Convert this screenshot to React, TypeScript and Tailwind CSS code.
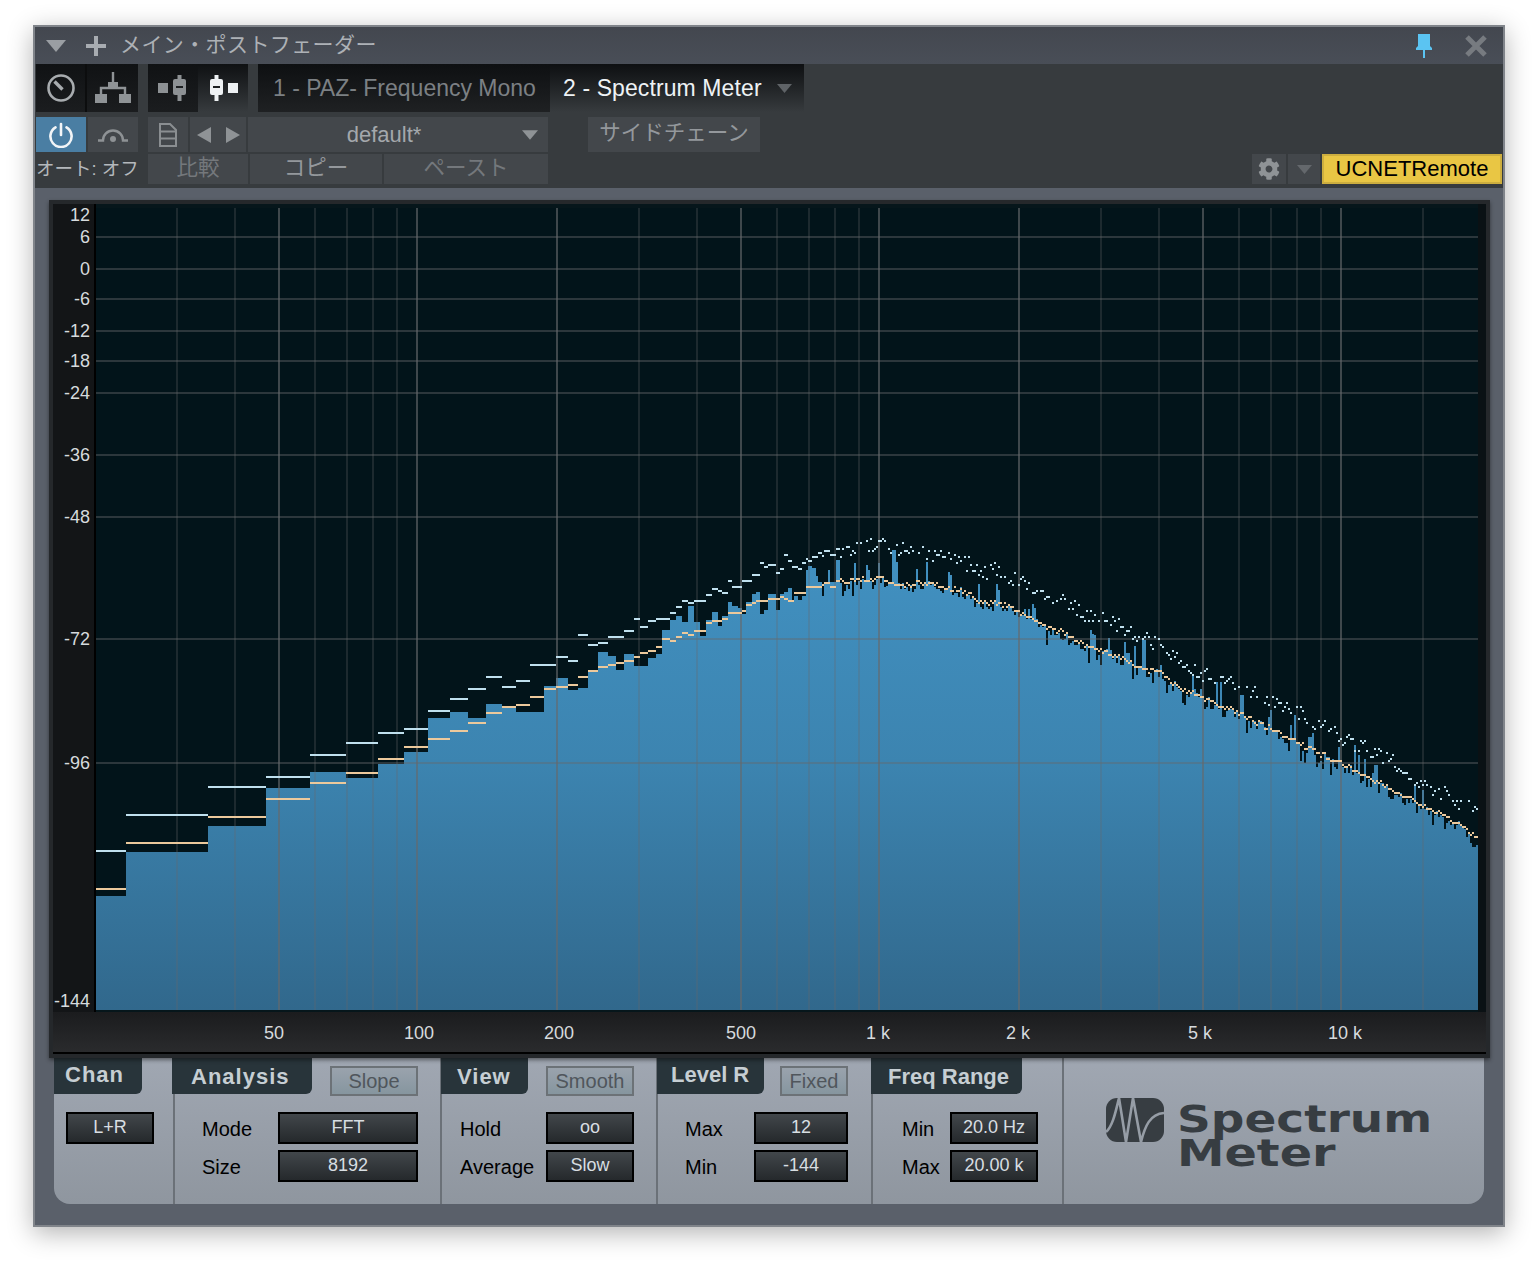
import { FaCog } from "react-icons/fa";

const sans = "font-['Liberation_Sans','Noto_Sans_CJK_JP',sans-serif]";

// [x0, x1, top of the blue, peak hold, average] measured off the low end of the spectrum
const lowBands: number[][] = [
  [96, 126, 896, 851, 889], [126, 208, 852, 815, 843], [208, 266, 826, 787, 817], [266, 310, 788, 777, 799],
  [310, 346, 772, 755, 783], [346, 378, 778, 743, 773], [378, 404, 764, 733, 759], [404, 428, 752, 729, 747],
  [428, 450, 718, 711, 739], [450, 468, 712, 699, 731], [468, 486, 718, 689, 723], [486, 502, 704, 677, 713],
  [502, 516, 708, 687, 707], [516, 530, 712, 681, 705], [530, 544, 712, 665, 697], [544, 556, 686, 665, 689],
  [556, 568, 678, 657, 687], [568, 578, 690, 661, 685], [578, 588, 688, 635, 677], [588, 598, 672, 645, 671],
  [598, 608, 652, 643, 667], [608, 616, 656, 637, 665], [616, 624, 670, 637, 663], [624, 634, 654, 631, 661],
  [634, 640, 666, 619, 657], [640, 648, 666, 627, 653], [648, 656, 658, 621, 651], [656, 662, 654, 619, 647],
  [662, 670, 630, 619, 639], [670, 676, 620, 613, 641], [676, 682, 616, 607, 637], [682, 688, 622, 601, 633],
  [688, 694, 606, 603, 635], [694, 700, 622, 601, 631], [700, 706, 636, 601, 631], [706, 712, 620, 595, 623],
  [712, 718, 612, 589, 621], [718, 722, 626, 591, 621], [722, 728, 616, 593, 619], [728, 732, 602, 581, 613],
  [732, 738, 606, 587, 613], [738, 742, 608, 587, 613], [742, 746, 614, 581, 611], [746, 752, 602, 581, 605],
  [752, 756, 594, 575, 603], [756, 760, 592, 575, 601], [760, 764, 614, 563, 601], [764, 768, 610, 567, 601],
  [768, 776, 594, 565, 599], [776, 780, 610, 573, 599], [780, 784, 594, 569, 597], [784, 788, 592, 555, 599],
  [788, 792, 588, 561, 601], [792, 794, 602, 567, 601], [794, 798, 596, 567, 593], [798, 802, 600, 569, 593],
  [802, 806, 596, 563, 593], [806, 808, 570, 559, 587], [808, 812, 566, 561, 587], [812, 816, 568, 557, 587],
  [816, 818, 576, 557, 587], [818, 822, 582, 553, 587], [822, 824, 596, 556, 585], [824, 828, 582, 551, 583],
  [828, 830, 570, 551, 583], [830, 836, 582, 555, 587], [836, 840, 560, 549, 581],
];

const avgCurve = [
  [840, 581], [880, 577], [900, 585], [920, 581], [940, 585], [960, 589], [980, 601], [1003, 603], [1020, 613], [1040, 623],
  [1060, 630], [1080, 642], [1100, 650], [1120, 656], [1140, 667], [1160, 672], [1180, 688], [1200, 695], [1220, 705],
  [1240, 713], [1260, 723], [1280, 732], [1300, 743], [1320, 753], [1340, 762], [1360, 773], [1380, 783], [1400, 793],
  [1420, 803], [1440, 813], [1460, 825], [1478, 837],
];
const peakCurve = [
  [840, 551], [880, 543], [913, 552], [940, 553], [960, 560], [980, 570], [1000, 570], [1020, 581], [1040, 593], [1060, 596],
  [1080, 611], [1100, 618], [1120, 626], [1140, 636], [1160, 643], [1180, 660], [1200, 671], [1220, 678], [1240, 686],
  [1260, 695], [1280, 706], [1300, 713], [1320, 723], [1340, 735], [1360, 746], [1380, 755], [1400, 766], [1420, 783],
  [1440, 791], [1460, 801], [1478, 811],
];

// spikes above the average and dips below it, x -> y
const spikes: Record<number, number> = {
  892: 550, 894: 550, 896: 562, 926: 562, 947: 572, 948: 572, 978: 584, 996: 584, 998: 590, 1032: 604, 1034: 608, 1090: 630, 1092: 634,
  1108: 638, 1110: 650, 1124: 642, 1134: 646, 1142: 640, 1144: 640, 1192: 676, 1216: 682, 1220: 682, 1240: 695, 1242: 695,
  1270: 710, 1294: 715, 1308: 737, 1310: 737, 1354: 745, 1358: 755, 1374: 765, 1376: 765, 1414: 785, 1422: 790,
  854: 563, 866: 565, 868: 570,
};
const dips: Record<number, number> = {
  842: 596, 852: 596, 886: 586, 912: 592, 1046: 645, 1062: 640, 1088: 663, 1096: 660, 1182: 703, 1222: 717, 1224: 717, 1288: 751,
  1300: 761, 1304: 763, 1322: 769, 1390: 799, 1416: 813, 1432: 825, 1444: 829, 1472: 847, 1474: 847, 1352: 775, 1250: 728,
};

const lerp = (curve: number[][], x: number) => {
  for (let i = 1; i < curve.length; i++) {
    if (x <= curve[i][0]) {
      const [x0, y0] = curve[i - 1];
      const [x1, y1] = curve[i];
      return y0 + ((y1 - y0) * (x - x0)) / (x1 - x0);
    }
  }
  return curve[curve.length - 1][1];
};

let seed = 4711;
const rnd = () => {
  seed = (seed * 16807) % 2147483647;
  return seed / 2147483647;
};
const snap = (v: number) => Math.round(v / 2) * 2 + 1;

const highBands: number[][] = [];
for (let x = 840; x < 1478; x += 2) {
  const avg = snap(lerp(avgCurve, x) + (rnd() - 0.5) * 5);
  let top = snap(avg + 2 + (rnd() - 0.5) * 10);
  const roll = rnd();
  if (roll < 0.1) top = avg - 6 - Math.floor(rnd() * 6) * 2;
  else if (x > 1000 && roll < 0.2) top = avg + 6 + Math.floor(rnd() * 6) * 2;
  if (spikes[x]) top = spikes[x];
  if (dips[x]) top = dips[x];
  const peak = rnd() < 0.8 ? snap(lerp(peakCurve, x) + (rnd() - 0.5) * 15) : 0;
  highBands.push([x, x + 2, top, peak, avg]);
}
const bands = [...lowBands, ...highBands];

const vLines = [
  [177, 0], [235, 0], [279, 1], [315, 0], [347, 0], [373, 0], [397, 0], [417, 1], [557, 1], [639, 0], [697, 0], [741, 1],
  [777, 0], [809, 0], [835, 0], [859, 0], [879, 1], [1019, 1], [1101, 0], [1159, 0], [1203, 1], [1239, 0], [1271, 0], [1297, 0],
  [1321, 0], [1341, 1], [1423, 0],
];
const hLines = [237, 269, 299, 331, 361, 393, 455, 517, 639, 763];

const dbTicks = [
  ["12", 215], ["6", 237], ["0", 269], ["-6", 299], ["-12", 331], ["-18", 361], ["-24", 393], ["-36", 455], ["-48", 517],
  ["-72", 639], ["-96", 763], ["-144", 1001],
] as const;
const freqTicks = [
  ["50", 274], ["100", 419], ["200", 559], ["500", 741], ["1 k", 878], ["2 k", 1018], ["5 k", 1200], ["10 k", 1345],
] as const;

const Spectrum = () => (
  <svg viewBox="96 208 1382 802" className="block h-[802px] w-[1382px]" shapeRendering="crispEdges">
    <defs>
      <linearGradient id="blue" gradientUnits="userSpaceOnUse" x1="0" y1="560" x2="0" y2="1010">
        <stop offset="0" stopColor="#4190c0" />
        <stop offset="0.45" stopColor="#3c84b0" />
        <stop offset="1" stopColor="#31688c" />
      </linearGradient>
    </defs>
    <rect x="96" y="208" width="1382" height="802" fill="#02141a" />
    {bands.map(([x0, x1, top]) => (
      <rect key={x0} x={x0} y={top} width={x1 - x0} height={1010 - top} fill="url(#blue)" />
    ))}
    {vLines.map(([x, strong]) => (
      <rect key={x} x={x - 1} y="208" width="2" height="802" fill="#66696c" opacity={strong ? 0.62 : 0.27} />
    ))}
    {hLines.map((y) => (
      <rect key={y} x="96" y={y - 1} width="1382" height="2" fill="#66696c" opacity="0.42" />
    ))}
    {bands.map(([x0, x1, , peak, avg]) => (
      <g key={x0}>
        {peak > 0 && <rect x={x0} y={peak - 1} width={x1 - x0} height="2" fill="#bfe0ee" />}
        <rect x={x0} y={avg - 1} width={x1 - x0} height="2" fill="#ecc99c" />
      </g>
    ))}
  </svg>
);

const Triangle = ({ className = "" }: { className?: string }) => (
  <svg viewBox="0 0 20 12" className={className} fill="currentColor">
    <path d="M0 0h20L10 12z" />
  </svg>
);

const Knob = () => (
  <svg viewBox="0 0 30 30" className="h-[30px] w-[30px]" fill="none" stroke="#a8acaf" strokeWidth="2.6">
    <circle cx="15" cy="15" r="12.5" />
    <path d="M8.5 8.5l8 8" strokeWidth="3.4" />
  </svg>
);

const Routing = () => (
  <svg viewBox="0 0 38 32" className="h-[32px] w-[38px]" fill="#8f9396" stroke="#8f9396">
    <path d="M19 0v12M7 23v-7h24v7" fill="none" strokeWidth="2.4" />
    <rect x="14" y="10" width="10" height="6" strokeWidth="0" />
    <rect x="1" y="22" width="12" height="9" strokeWidth="0" />
    <rect x="25" y="22" width="12" height="9" strokeWidth="0" />
  </svg>
);

const Fader = ({ color, flip }: { color: string; flip?: boolean }) => (
  <svg viewBox="0 0 30 26" className="h-[26px] w-[30px]">
    <g transform={flip ? "translate(30 0) scale(-1 1)" : undefined}>
      <rect x="0" y="8" width="10" height="10" fill={color} />
      <rect x="19.5" y="0" width="4" height="26" fill={color} />
      <rect x="15" y="4" width="13" height="16" rx="2" fill={color} />
      <rect x="18" y="11" width="7" height="2" fill="#1c1f21" />
    </g>
  </svg>
);

const Power = () => (
  <svg viewBox="0 0 26 26" className="h-[26px] w-[26px]" fill="none" stroke="#f2f5f7" strokeWidth="2.6" strokeLinecap="round">
    <path d="M13 2v11" />
    <path d="M7.5 5.3a10.6 10.6 0 1 0 11 0" />
  </svg>
);

const Arc = () => (
  <svg viewBox="0 0 30 14" className="h-[14px] w-[30px]" fill="none" stroke="#8e9295" strokeWidth="2.4">
    <path d="M0 12.5h5a10 10 0 0 1 20 0h5" />
    <circle cx="15" cy="11" r="3" fill="#8e9295" stroke="none" />
  </svg>
);

const FileIcon = () => (
  <svg viewBox="0 0 18 24" className="h-[24px] w-[18px]" fill="none" stroke="#8a8e91" strokeWidth="2">
    <path d="M1 1h10l6 6v16H1zM1 8.5h16M1 15.5h16" />
  </svg>
);

const Arrow = ({ right }: { right?: boolean }) => (
  <svg viewBox="0 0 14 16" className="h-[16px] w-[14px]" fill="#8f9396">
    <path d={right ? "M0 0l14 8-14 8z" : "M14 0L0 8l14 8z"} />
  </svg>
);

const Pin = () => (
  <svg viewBox="0 0 16 24" className="h-[24px] w-[16px]" fill="#5bc4f2">
    <path d="M2 0h12v12l2 2v2H0v-2l2-2zM7 16h2v8H7z" />
  </svg>
);

const Close = () => (
  <svg viewBox="0 0 22 22" className="h-[22px] w-[22px]" stroke="#777b80" strokeWidth="5">
    <path d="M2 2l18 18M20 2L2 20" />
  </svg>
);

const Logo = () => (
  <svg viewBox="0 0 58 44" className="h-[44px] w-[58px] shrink-0">
    <rect width="58" height="44" rx="11" fill="#373d42" />
    <path d="M0 34C7 28 10 12 13 0l7 44 7-44 8 44C39 28 44 16 58 15" fill="none" stroke="#969da6" strokeWidth="2.6" />
  </svg>
);

const Tab = ({ label, className }: { label: string; className: string }) => (
  <div
    className={`flex h-[36px] shrink-0 items-center rounded-br-[6px] bg-[#28343a] text-[22px] font-bold text-[#c6ced3] ${className}`}
  >
    {label}
  </div>
);

const Toggle = ({ label, className }: { label: string; className: string }) => (
  <div
    className={`mt-2 flex h-[30px] items-center justify-center border-2 border-[#6c7277] bg-gradient-to-b from-[#9aa3ad] to-[#86969f] text-[20px] text-[#50565c] ${className}`}
  >
    {label}
  </div>
);

const Value = ({ label, className }: { label: string; className: string }) => (
  <div
    className={`flex h-[32px] shrink-0 items-center justify-center border-2 border-black bg-gradient-to-b from-[#42474b] to-[#25292c] pb-px text-[18px] text-[#d8dee2] ${className}`}
  >
    {label}
  </div>
);

const Row = ({ label, value, labelW, valueW }: { label: string; value: string; labelW: string; valueW: string }) => (
  <div className="flex items-center">
    <span className={`pt-[2px] text-[20px] text-black ${labelW}`}>{label}</span>
    <Value label={value} className={valueW} />
  </div>
);

const Block = ({ children, className = "" }: { children?: React.ReactNode; className?: string }) => (
  <div className={`flex shrink-0 items-center justify-center bg-[#43474b] text-[#8f9396] ${className}`}>{children}</div>
);

export default function App() {
  return (
    <div className={`h-[1268px] w-[1538px] bg-white pl-[33px] pt-[25px] ${sans}`}>
      <div className="flex h-[1202px] w-[1472px] flex-col border-2 border-[#80848a] shadow-[0_6px_24px_rgba(0,0,0,0.3)]">
        {/* title bar */}
        <div className="flex h-[37px] shrink-0 items-center bg-gradient-to-b from-[#43474f] to-[#494e57] pl-[11px] pr-[16px]">
          <Triangle className="h-[12px] w-[20px] text-[#9a9ea3]" />
          <span className="ml-[20px] text-[#a8acb1]">
            <svg viewBox="0 0 20 20" className="h-[20px] w-[20px]" fill="currentColor">
              <path d="M8 0h4v8h8v4h-8v8H8v-8H0V8h8z" />
            </svg>
          </span>
          <span className="mb-[2px] ml-[14px] text-[21px] tracking-[0.4px] text-[#adb1b6]">メイン・ポストフェーダー</span>
          <div className="ml-auto flex items-center gap-[33px]">
            <Pin />
            <Close />
          </div>
        </div>

        {/* toolbar */}
        <div className="flex h-[124px] shrink-0 flex-col bg-[#373b3e] pl-px pr-px">
          <div className="flex h-[48px] shrink-0">
            <div className="flex w-[102px] bg-gradient-to-b from-[#101214] to-[#1b1d1f]">
              <div className="flex w-[51px] items-center justify-center border-r-2 border-[#0c0d0e]">
                <Knob />
              </div>
              <div className="flex flex-1 items-center justify-center">
                <Routing />
              </div>
            </div>
            <div className="ml-[10px] flex w-[100px]">
              <div className="flex w-[50px] items-center justify-center bg-gradient-to-b from-[#101214] to-[#1b1d1f]">
                <Fader color="#8d9194" />
              </div>
              <div className="flex w-[50px] items-center justify-center bg-gradient-to-b from-[#0f1113] to-[#373b3e]">
                <Fader color="#eef1f3" flip />
              </div>
            </div>
            <div className="ml-[10px] flex w-[292px] items-center bg-gradient-to-b from-[#0e1012] to-[#1f2123] pl-[15px] text-[23px] text-[#7c8084]">
              1 - PAZ- Frequency Mono
            </div>
            <div className="flex w-[254px] items-center bg-gradient-to-b from-[#0e1012] to-[#373b3e] pl-[13px] text-[23px] tracking-[0.1px] text-[#eef2f5]">
              2 - Spectrum Meter
              <Triangle className="ml-[15px] h-[9px] w-[15px] text-[#5f6367]" />
            </div>
          </div>
          <div className="mt-[5px] flex h-[35px] shrink-0">
            <div className="flex w-[50px] items-center justify-center bg-[#4a7ea3]">
              <Power />
            </div>
            <Block className="ml-[2px] w-[50px]">
              <Arc />
            </Block>
            <Block className="ml-[10px] w-[40px]">
              <FileIcon />
            </Block>
            <Block className="ml-[2px] w-[56px] gap-[15px]">
              <Arrow />
              <Arrow right />
            </Block>
            <Block className="relative ml-[2px] w-[300px] pb-[1px] pr-[28px] text-[22px] text-[#a4a8ac]">
              default*
              <Triangle className="absolute right-[10px] top-[13px] h-[10px] w-[16px] text-[#8f9396]" />
            </Block>
            <Block className="ml-[40px] w-[172px] pb-[2px] text-[21.5px] text-[#94989c]">サイドチェーン</Block>
          </div>
          <div className="mt-[2px] flex h-[30px] shrink-0">
            <div className="flex w-[102px] items-center whitespace-nowrap text-[18.5px] text-[#b4b8bc]">オート: オフ</div>
            <Block className="ml-[10px] w-[100px] pb-px text-[21.5px] text-[#74787c]">比較</Block>
            <Block className="ml-[2px] w-[132px] pb-px text-[21.5px] text-[#94989c]">コピー</Block>
            <Block className="ml-[2px] w-[164px] pb-px text-[21.5px] text-[#74787c]">ペースト</Block>
            <Block className="ml-auto w-[34px]">
              <FaCog className="text-[22px] text-[#8f9396]" />
            </Block>
            <Block className="ml-[2px] w-[32px]">
              <Triangle className="h-[9px] w-[15px] text-[#64686c]" />
            </Block>
            <div className="ml-[2px] flex w-[180px] items-center justify-center border-2 border-[#cdae3f] bg-[#e9c644] pb-[2px] text-[22px] text-black">
              UCNETRemote
            </div>
          </div>
        </div>

        {/* body */}
        <div className="flex-1 bg-[#5a606a] pt-[12px]">
          {/* chart */}
          <div className="relative z-10 ml-[14px] h-[858px] w-[1441px] bg-[#25282b] p-[4px] shadow-[0_2px_4px_rgba(0,0,0,0.45)]">
            <div className="flex h-[850px] flex-col bg-black">
              <div className="flex h-[808px] shrink-0">
                <div className="relative w-[41px] shrink-0 bg-[#131517] text-[18px] text-[#d6dadd]">
                  {dbTicks.map(([label, y]) => (
                    <span key={label} className="absolute right-[4px] -translate-y-1/2 leading-none" style={{ top: y - 204 }}>
                      {label}
                    </span>
                  ))}
                </div>
                <div className="ml-[2px] bg-[#06161b] pt-[4px]">
                  <Spectrum />
                </div>
                <div className="w-[9px] bg-[#0a1114]" />
              </div>
              <div className="relative h-[40px] shrink-0 bg-gradient-to-b from-[#1b1c1e] to-[#2a2b2d] text-[18px] text-[#d6dadd]">
                {freqTicks.map(([label, x]) => (
                  <span key={label} className="absolute top-[12px] -translate-x-1/2 leading-none" style={{ left: x - 53 }}>
                    {label}
                  </span>
                ))}
              </div>
            </div>
          </div>

          {/* controls */}
          <div className="ml-[19px] flex h-[146px] w-[1430px] rounded-b-[16px] bg-gradient-to-b from-[#a0a7b2] to-[#8f969f]">
            <div className="w-[119px] shrink-0">
              <Tab label="Chan" className="w-[88px] pb-[4px] pl-[11px] tracking-[1px]" />
              <div className="pl-[12px] pt-[18px]">
                <Value label="L+R" className="w-[88px]" />
              </div>
            </div>
            <div className="w-[267px] shrink-0 border-l-2 border-[#6b7178]">
              <div className="flex">
                <Tab label="Analysis" className="-ml-[3px] w-[140px] pl-[19px] tracking-[1px]" />
                <Toggle label="Slope" className="ml-[18px] w-[88px]" />
              </div>
              <div className="flex flex-col gap-[6px] pl-[27px] pt-[16px]">
                <Row label="Mode" value="FFT" labelW="w-[76px]" valueW="w-[140px]" />
                <Row label="Size" value="8192" labelW="w-[76px]" valueW="w-[140px]" />
              </div>
            </div>
            <div className="w-[216px] shrink-0 border-l-2 border-[#6b7178]">
              <div className="flex">
                <Tab label="View" className="-ml-[1px] w-[87px] pl-[16px] tracking-[1px]" />
                <Toggle label="Smooth" className="ml-[18px] w-[88px]" />
              </div>
              <div className="flex flex-col gap-[6px] pl-[18px] pt-[16px]">
                <Row label="Hold" value="oo" labelW="w-[86px]" valueW="w-[88px]" />
                <Row label="Average" value="Slow" labelW="w-[86px]" valueW="w-[88px]" />
              </div>
            </div>
            <div className="w-[215px] shrink-0 border-l-2 border-[#6b7178]">
              <div className="flex">
                <Tab label="Level R" className="-ml-[1px] w-[107px] pb-[4px] pl-[14px]" />
                <Toggle label="Fixed" className="ml-[16px] w-[68px]" />
              </div>
              <div className="flex flex-col gap-[6px] pl-[27px] pt-[16px]">
                <Row label="Max" value="12" labelW="w-[69px]" valueW="w-[94px]" />
                <Row label="Min" value="-144" labelW="w-[69px]" valueW="w-[94px]" />
              </div>
            </div>
            <div className="w-[191px] shrink-0 border-l-2 border-[#6b7178]">
              <Tab label="Freq Range" className="-ml-[2px] w-[151px] pl-[17px]" />
              <div className="flex flex-col gap-[6px] pl-[29px] pt-[18px]">
                <Row label="Min" value="20.0 Hz" labelW="w-[48px]" valueW="w-[88px]" />
                <Row label="Max" value="20.00 k" labelW="w-[48px]" valueW="w-[88px]" />
              </div>
            </div>
            <div className="flex flex-1 border-l-2 border-[#6b7178] pl-[42px] pt-[40px]">
              <Logo />
              <div className="ml-[13px] flex flex-col pt-[5px] font-['DejaVu_Sans',sans-serif] text-[37px] font-bold leading-[34px] text-[#373d42]">
                <span className="origin-left scale-x-[1.27]">Spectrum</span>
                <span className="origin-left scale-x-[1.29]">Meter</span>
              </div>
            </div>
          </div>
        </div>
      </div>
    </div>
  );
}
